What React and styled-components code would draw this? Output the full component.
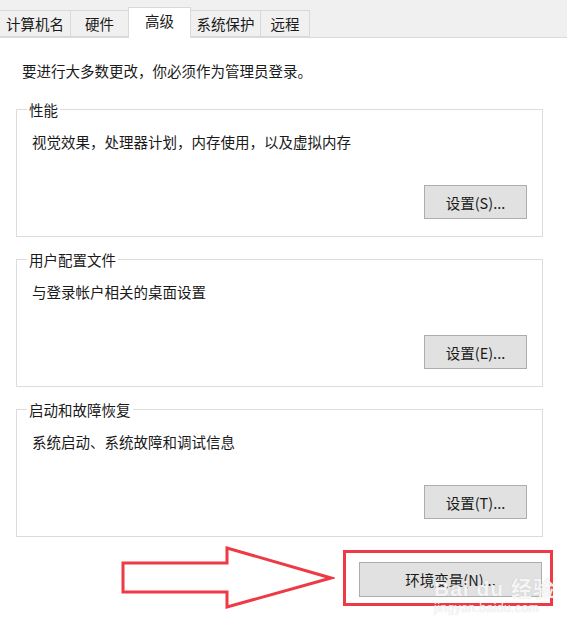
import styled, { createGlobalStyle } from "styled-components";

const GlobalStyle = createGlobalStyle`
  html, body {
    margin: 0;
    padding: 0;
    background: #ffffff;
  }
  body {
    font-family: "Noto Sans CJK SC", "Noto Sans", sans-serif;
    color: #1a1a1a;
  }
`

const tabs = [
    {label: '计算机名', width: 72},
    {label: '硬件', width: 59},
    {label: '高级', width: 63, active: true},
    {label: '系统保护', width: 71},
    {label: '远程', width: 50},
]

const groups = [
    {title: '性能', desc: '视觉效果，处理器计划，内存使用，以及虚拟内存', button: '设置(S)...'},
    {title: '用户配置文件', desc: '与登录帐户相关的桌面设置', button: '设置(E)...'},
    {title: '启动和故障恢复', desc: '系统启动、系统故障和调试信息', button: '设置(T)...'},
]

function App() {
    return (
        <>
            <GlobalStyle/>
            <Page>
                <TabStrip>
                    {tabs.map(({label, width, active}) => (
                        <Tab key={label} $width={width} $active={active}>{label}</Tab>
                    ))}
                </TabStrip>
                <Content>
                    <Notice>要进行大多数更改，你必须作为管理员登录。</Notice>
                    <Groups>
                        {groups.map(({title, desc, button}) => (
                            <GroupBox key={title}>
                                <Legend>{title}</Legend>
                                <Desc>{desc}</Desc>
                                <Button>{button}</Button>
                            </GroupBox>
                        ))}
                    </Groups>
                    <BottomRow>
                        <svg width="214" height="63" viewBox="0 0 214 63">
                            <polygon
                                points="2,17 106,17 106,2 210,32 106,61 106,46 2,46"
                                fill="#ffffff"
                                stroke="#ee3a45"
                                strokeWidth="3"
                                strokeLinejoin="miter"
                            />
                        </svg>
                        <RedFrame>
                            <EnvButton>环境变量(N)...</EnvButton>
                        </RedFrame>
                    </BottomRow>
                </Content>
                <Watermark>
                    <WatermarkLogo>Bai du 经验</WatermarkLogo>
                    <WatermarkUrl>jingyan.baidu.com</WatermarkUrl>
                </Watermark>
            </Page>
        </>
    )
}

export default App;

const Page = styled.div`
  position: relative;
  width: 567px;
  height: 625px;
  overflow: hidden;
  background: #ffffff;
`

const TabStrip = styled.div`
  display: flex;
  align-items: flex-end;
  height: 38px;
  box-sizing: border-box;
  background: #f0f0f0;
  border-bottom: 1px solid #dadada;
`

const Tab = styled.div`
  width: ${p => p.$width}px;
  height: ${p => p.$active ? 31 : 27}px;
  margin-bottom: ${p => p.$active ? -1 : 0}px;
  box-sizing: border-box;
  display: flex;
  align-items: center;
  justify-content: center;
  padding-bottom: ${p => p.$active ? 4 : 0}px;
  background: ${p => p.$active ? '#ffffff' : '#f0f0f0'};
  border: 1px solid #d9d9d9;
  border-bottom: ${p => p.$active ? 'none' : '1px solid #d9d9d9'};
  margin-left: -1px;
  font-size: 14.5px;
  line-height: 18px;
  color: #1a1a1a;
`

const Content = styled.div`
  padding: 23px 0 0 16px;
`

const Notice = styled.div`
  padding-left: 6px;
  font-size: 14.5px;
  line-height: 20px;
`

const Groups = styled.div`
  display: flex;
  flex-direction: column;
  gap: 22px;
  margin-top: 28px;
  width: 527px;
`

const GroupBox = styled.div`
  height: 128px;
  box-sizing: border-box;
  border: 1px solid #dcdcdc;
  display: flex;
  flex-direction: column;
  padding: 0 15px 17px 0;
`

const Legend = styled.div`
  margin: -10px 0 0 10px;
  padding: 0 2px;
  width: fit-content;
  background: #ffffff;
  font-size: 14.5px;
  line-height: 20px;
`

const Desc = styled.div`
  margin: 12px 0 0 15px;
  font-size: 14.5px;
  line-height: 20px;
`

const Button = styled.button`
  margin-top: auto;
  align-self: flex-end;
  width: 103px;
  height: 34px;
  box-sizing: border-box;
  background: #e1e1e1;
  border: 1px solid #adadad;
  font-family: "Noto Sans CJK SC", "Noto Sans", sans-serif;
  font-size: 14.5px;
  color: #1a1a1a;
  padding: 0;
`

const BottomRow = styled.div`
  display: flex;
  justify-content: flex-end;
  align-items: center;
  gap: 8px;
  margin: 9px 14px 0 0;
`

const RedFrame = styled.div`
  border: 3px solid #ee3a45;
  padding: 9px 8px 6px 13px;
`

const EnvButton = styled(Button)`
  display: block;
  width: 183px;
  height: 35px;
`

const Watermark = styled.div`
  position: absolute;
  left: 434px;
  top: 576px;
  display: flex;
  flex-direction: column;
  align-items: flex-start;
  pointer-events: none;
  color: rgba(255, 255, 255, 0.85);
  text-shadow: 0 0 1px rgba(150, 150, 150, 0.45);
  font-family: "Liberation Sans", "Noto Sans CJK SC", sans-serif;
`

const WatermarkLogo = styled.span`
  font-size: 21px;
  font-weight: bold;
  line-height: 25px;
  letter-spacing: 1px;
`

const WatermarkUrl = styled.span`
  font-size: 12px;
  line-height: 14px;
  letter-spacing: 0.5px;
`
